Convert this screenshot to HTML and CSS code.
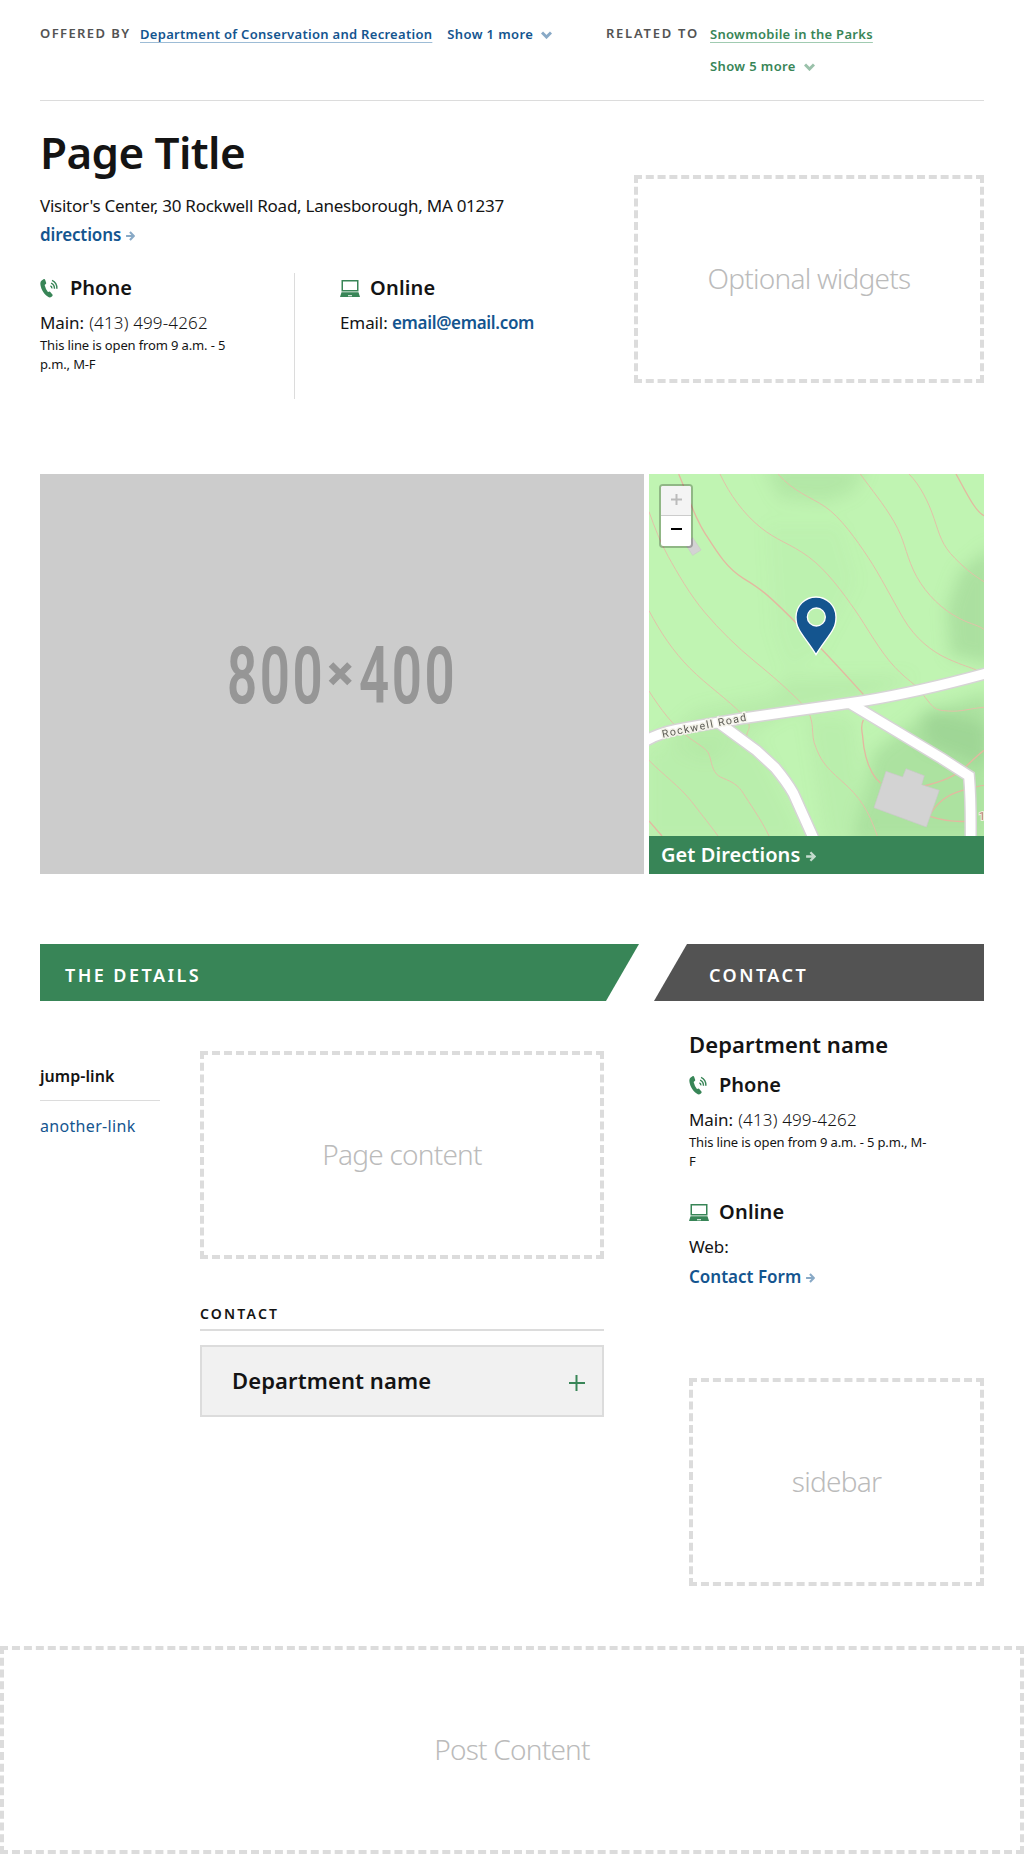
FILE: index.html
```html
<!DOCTYPE html>
<html lang="en">
<head>
<meta charset="utf-8">
<title>Page Title</title>
<link rel="stylesheet" href="styles.css">
</head>
<body>
<svg class="sprite" width="0" height="0" aria-hidden="true">
  <symbol id="phone" viewBox="0 0 18 20"><path d="M1.300 1.500 3.600.1Q4.600-.2 5 1L6 3.900Q6.300 5 5.300 5.500L4.400 6.200Q5.400 10.500 7.900 13.600L9 13.300Q10 13 10.600 13.900L12.600 16.400Q13.200 17.400 12.300 18.100L11.300 19Q9.700 20 7.600 18.400C2.400 15-.3 8-.1 4.300Q.1 2.300 1.300 1.500Z"/><g fill="none" stroke="currentColor" stroke-width="1.500"><path d="M10.500 7.200q1.700.7 1.500 2.600M11.200 4.300q3.500 1.300 3.600 5.900M12.200 1.500q5.300 2.300 5.100 8.800"/></g></symbol>
  <symbol id="laptop" viewBox="0 0 20 17"><path fill-rule="evenodd" d="M1.500 0h17v11.500h-17zM3 1.500v8.500h14V1.500z"/><path d="M1.500 12.300h17L20 17H0zM8 15.300v1h4v-1z" fill-rule="evenodd"/></symbol>
  <symbol id="arrow" viewBox="0 0 8 9"><path d="M0 4.500h7M3.500 1l3.500 3.500L3.500 8" fill="none" stroke="currentColor" stroke-width="1.900"/></symbol>
  <symbol id="chevron" viewBox="0 0 11 8"><path d="M1 1.500l4.500 4.500L10 1.500" fill="none" stroke="currentColor" stroke-width="3"/></symbol>
</svg>

<div class="container">
  <div class="relations">
    <div class="relation offered">
      <span class="relation-label">OFFERED BY</span>
      <div class="relation-items">
        <a class="underlined">Department of Conservation and Recreation</a>
        <a class="more">Show 1 more<svg class="chevron"><use href="#chevron"/></svg></a>
      </div>
    </div>
    <div class="relation related">
      <span class="relation-label">RELATED TO</span>
      <div class="relation-items">
        <a class="underlined">Snowmobile in the Parks</a>
        <a class="more">Show 5 more<svg class="chevron"><use href="#chevron"/></svg></a>
      </div>
    </div>
  </div>

  <header class="page-header">
    <div class="intro">
      <h1>Page Title</h1>
      <p class="address">Visitor's Center, 30 Rockwell Road, Lanesborough, MA 01237</p>
      <p class="directions"><a class="link">directions<svg class="arrow"><use href="#arrow"/></svg></a></p>
      <div class="contact-row">
        <section class="contact-group">
          <h2 class="contact-title"><svg class="phone"><use href="#phone"/></svg>Phone</h2>
          <p class="contact-line">Main: <span class="number">(413) 499-4262</span></p>
          <p class="note">This line is open from 9 a.m. - 5 p.m., M-F</p>
        </section>
        <section class="contact-group online">
          <h2 class="contact-title"><svg class="laptop"><use href="#laptop"/></svg>Online</h2>
          <p class="contact-line">Email: <a class="link email">email@email.com</a></p>
        </section>
      </div>
    </div>
    <div class="placeholder widgets">Optional widgets</div>
  </header>

  <div class="location">
    <svg class="photo" viewBox="0 0 604 400">
      <text class="photo-size" transform="translate(187 229) scale(.66 1)">800</text>
      <path class="photo-times" d="M291 190.500 309.500 209M309.500 190.500 291 209"/>
      <text class="photo-size" transform="translate(319 229) scale(.66 1)">400</text>
    </svg>
    <div class="map-card">
      <div class="map">
        <svg class="map-canvas" viewBox="27 27 1005 1086" preserveAspectRatio="none">
          <defs><filter id="soft" x="-30%" y="-30%" width="160%" height="160%"><feGaussianBlur stdDeviation="24"/></filter></defs>
          <rect x="27" y="27" width="1005" height="1086" fill="#c0f4b2"/>
          <g class="shade" filter="url(#soft)">
            <path d="M370 0H680L640 80 560 110 420 100Z" opacity=".25"/>
            <path d="M1060 240 960 320 920 430 930 570 1060 600Z" opacity=".4"/>
            <path d="M1050 680 860 740 700 860 640 1130H1050Z" opacity=".38"/>
            <path d="M440 640 820 635 700 690 440 740 200 880 60 830 170 735 400 690Z" opacity=".17"/>
            <path d="M380 180H600L650 350 540 560 440 620 400 500Z" opacity=".06"/>
            <path d="M850 730 1050 780V910L860 840Z" opacity=".4"/>
            <path d="M20 850 350 830 500 1130H20Z" opacity=".12"/>
            <path d="M500 750 640 760 680 1130H560Z" opacity=".12"/>
          </g>
          <g class="contours">
            <path d="M240 27C270 90 310 145 360 186S450 235 505 275 610 385 645 435 720 560 765 607 815 645 850 690 885 735 925 738 990 730 1032 727"/>
            <path d="M414 27C460 80 510 95 555 125S650 225 685 278 755 400 790 460 875 560 925 582 985 605 1010 615"/>
            <path d="M661 27C695 75 730 115 762 170S795 260 820 315 890 420 940 450 1005 475 1032 493"/>
            <path d="M807 27C840 60 865 110 882 160S905 240 945 280 1005 333 1032 350"/>
            <path d="M27 140C45 190 60 230 85 275S150 390 195 443 290 545 345 590 440 670 485 715 510 800 525 840 550 900 605 948 685 1035 712 1113"/>
            <path d="M27 437C60 500 100 560 150 610S265 705 305 747 320 790 320 815"/>
            <path d="M27 678C60 730 100 785 150 820S205 855 212 885 225 930 250 940 295 960 310 985 365 1065 387 1113"/>
            <path d="M27 886C70 930 120 965 155 1010S210 1080 234 1113"/>
            <g class="major">
              <path d="M116 27C145 95 160 150 195 205S260 310 310 340 380 385 465 470 600 610 670 688M670 765C660 785 667 800 668 815S675 915 722 955M948 27C975 75 1005 140 1032 152M27 1068 66 1113M845 964Q935 945 977 905T1032 856M870 1050Q900 995 965 977T1032 962M870 1054Q925 1072 980 1069"/>
            </g>
          </g>
          <path d="M140 243 158 218 183 255 158 271Z" class="building"/>
          <path d="M738 919 788 936 798 911 853 932 845 959 898 976 859 1086 702 1028Z" class="building"/>
          <path class="road-edge" d="M15 829Q60 800 140 788L300 761 670 708Q840 680 1050 622M225 765 350 857 405 908Q440 950 460 985L525 1130M630 715 760 793 905 880 987 933Q993 1000 992 1120"/>
          <path class="road" d="M15 829Q60 800 140 788L300 761 670 708Q840 680 1050 622M225 765 350 857 405 908Q440 950 460 985L525 1130M630 715 760 793 905 880 987 933Q993 1000 992 1120"/>
          <text class="road-name" x="68" y="818" textLength="257" transform="rotate(-11.500 68 818)">Rockwell Road</text>
          <text class="contour-name" x="1016" y="1066">1</text>
          <path class="pin" fill-rule="evenodd" d="M528 569C515 545 485 510 476 491 468 478 468 466 468 456A60 60 0 0 1 588 456C588 466 588 478 580 491 571 510 541 545 528 569ZM529 429A27 27 0 1 0 529 483 27 27 0 1 0 529 429Z"/>
        </svg>
        <div class="zoom">
          <span class="zoom-in"><svg width="11" height="11"><path d="M0 5.500h11M5.500 0v11" stroke="currentColor" stroke-width="2"/></svg></span>
          <span class="zoom-out"><svg width="11" height="2"><path d="M0 1h11" stroke="currentColor" stroke-width="2"/></svg></span>
        </div>
      </div>
      <a class="map-link">Get Directions<svg class="arrow"><use href="#arrow"/></svg></a>
    </div>
  </div>

  <main class="columns">
    <div class="main-column">
      <h2 class="banner banner-main">THE DETAILS</h2>
      <div class="details">
        <nav class="jump-links">
          <a class="jump current">jump-link</a>
          <a class="jump">another-link</a>
        </nav>
        <div class="content">
          <div class="placeholder">Page content</div>
          <h3 class="section-title">CONTACT</h3>
          <div class="accordion"><span>Department name</span><svg width="16" height="16"><path d="M0 8h16M7.500 0v16" stroke="currentColor" stroke-width="2"/></svg></div>
        </div>
      </div>
    </div>
    <aside class="side-column">
      <h2 class="banner banner-side">CONTACT</h2>
      <div class="side-body">
        <h3 class="department">Department name</h3>
        <section>
          <h4 class="contact-title"><svg class="phone"><use href="#phone"/></svg>Phone</h4>
          <p class="contact-line">Main: <span class="number">(413) 499-4262</span></p>
          <p class="note">This line is open from 9 a.m. - 5 p.m., M-F</p>
        </section>
        <section class="side-online">
          <h4 class="contact-title"><svg class="laptop"><use href="#laptop"/></svg>Online</h4>
          <p class="contact-line">Web:</p>
          <p class="form-link"><a class="link">Contact Form<svg class="arrow"><use href="#arrow"/></svg></a></p>
        </section>
        <div class="placeholder">sidebar</div>
      </div>
    </aside>
  </main>
</div>
<div class="placeholder">Post Content</div>
</body>
</html>
```
FILE: styles.css
```css
* { box-sizing: border-box; }
body { margin: 0; background: #fff; color: #141414; font-family: "Noto Sans", sans-serif; font-size: 17px; }
h1, h2, h3, h4, p { margin: 0; }
.sprite { display: block; height: 0; }
.container { padding: 18px 40px 0; }

.relations { display: flex; height: 83px; border-bottom: 1px solid #dcdcdc; font-size: 13px; line-height: 32px; font-weight: 600; letter-spacing: .29px; }
.relation { display: flex; align-items: flex-start; }
.offered { width: 566px; gap: 10px; color: #14558f; }
.related { gap: 10px; color: #388557; }
.relation-label { flex: none; color: #535353; line-height: 30px; letter-spacing: 1.4px; white-space: nowrap; }
.offered .relation-label { width: 90px; }
.related .relation-label { width: 94px; letter-spacing: 1.75px; }
.relation-items { display: flex; }
.offered .relation-items { gap: 15px; }
.related .relation-items { flex-direction: column; align-items: flex-start; }
.underlined { height: 32px; white-space: nowrap; text-decoration: underline; text-decoration-thickness: 1px; text-underline-offset: 3px; text-decoration-color: #9dbcd6; }
.related .underlined { text-decoration-color: #a0cbb1; }
.more { white-space: nowrap; letter-spacing: .38px; }
.chevron { width: 11px; height: 8px; margin-left: 8px; opacity: .5; }

.page-header { display: flex; justify-content: space-between; padding-top: 25px; }
.intro { width: 564px; }
h1 { font-size: 44px; line-height: 53px; font-weight: 600; letter-spacing: -.6px; margin-bottom: 12px; }
.address { line-height: 30px; letter-spacing: -.26px; }
.directions { line-height: 28px; }
.link { color: #14558f; font-weight: 600; }
.directions .link { letter-spacing: -.12px; }
.email { letter-spacing: -.32px; }
.arrow { width: 9px; height: 10px; margin-left: 5px; opacity: .5; }
.contact-row { display: flex; margin-top: 24px; height: 126px; }
.contact-group { width: 254px; padding-right: 60px; }
.online { border-left: 1px solid #dcdcdc; padding: 0 0 0 45px; }
.contact-title { display: flex; align-items: center; font-size: 20px; line-height: 30px; font-weight: 600; }
.online .contact-title, .side-online .contact-title { letter-spacing: .2px; }
.phone { width: 18px; height: 19px; margin-right: 12px; color: #388557; fill: #388557; }
.laptop { width: 20px; height: 17px; margin-right: 10px; fill: #388557; }
.contact-line { margin-top: 7px; line-height: 26px; letter-spacing: -.1px; white-space: nowrap; }
.number { font-weight: 300; letter-spacing: .15px; margin-left: 1px; }
.note { font-size: 13px; line-height: 19px; letter-spacing: -.14px; }

.placeholder { height: 208px; padding-bottom: 2px; border: 4px dashed #dcdcdc; color: #bbb; font-size: 28px; font-weight: 300; letter-spacing: -.77px; display: flex; align-items: center; justify-content: center; }
.widgets { width: 350px; margin-top: 49px; }

.location { display: flex; gap: 5px; margin-top: 75px; height: 400px; }
.photo { width: 604px; height: 400px; background: #ccc; }
.photo-size { font-family: Roboto, sans-serif; font-size: 80px; font-weight: 600; letter-spacing: 4px; fill: #969696; }
.photo-times { stroke: #969696; stroke-width: 6.5; }
.map-card { width: 335px; }
.map { height: 362px; position: relative; }
.map-canvas { display: block; width: 335px; height: 362px; }
.shade { fill: #8cc484; }
.contours { fill: none; stroke: #e2c0a8; stroke-width: 3; }
.major { stroke: #e3b8a0; stroke-width: 4; }
.building { fill: #d3d3d3; stroke: #cac7c9; stroke-width: 2; }
.road, .road-edge { fill: none; stroke-linejoin: miter; }
.road-edge { stroke: #d6d4d5; stroke-width: 38; }
.road { stroke: #fff; stroke-width: 29; }
.road-name { font-family: Roboto, sans-serif; font-size: 32px; fill: #5c5c55; stroke: #f4f3ea; stroke-width: 9; paint-order: stroke; stroke-linejoin: round; }
.contour-name { font-family: Roboto, sans-serif; font-size: 34px; fill: #b97c70; stroke: #f0efe0; stroke-width: 6; paint-order: stroke; }
.pin { fill: #14558f; stroke: #fff; stroke-width: 4; }
.zoom { position: absolute; left: 10px; top: 10px; width: 34px; border: 2px solid rgba(0, 0, 0, .25); border-radius: 4px; background-clip: padding-box; background-color: #fff; }
.zoom-in, .zoom-out { display: flex; height: 30px; align-items: center; justify-content: center; }
.zoom-in { padding-bottom: 3px; background: #f4f4f4; color: #bbb; border-bottom: 1px solid #ccc; border-radius: 2px 2px 0 0; }
.zoom-out { color: #000; padding-bottom: 4px; }
.map-link { display: block; height: 38px; padding-left: 12px; background: #388557; color: #fff; font-size: 20px; font-weight: 600; line-height: 37px; letter-spacing: .05px; }
.map-link .arrow { width: 10px; height: 11px; margin-left: 6px; opacity: .7; }

.columns { display: flex; justify-content: space-between; margin-top: 70px; height: 702px; }
.main-column { width: 599px; }
.side-column { width: 330px; }
.banner { height: 57px; color: #fff; font-size: 18px; font-weight: 600; line-height: 62px; letter-spacing: 2.45px; }
.banner-main { padding-left: 25px; background: #388557; clip-path: polygon(0 0, 100% 0, 566px 100%, 0 100%); }
.banner-side { padding-left: 55px; background: #535353; clip-path: polygon(33px 0, 100% 0, 100% 100%, 0 100%); }
.details { display: flex; gap: 40px; padding-top: 50px; }
.jump-links { width: 120px; }
.jump { display: block; height: 50px; line-height: 50px; font-size: 16px; letter-spacing: .32px; color: #14558f; }
.current { color: #141414; font-weight: 600; letter-spacing: .05px; border-bottom: 1px solid #dcdcdc; }
.content { width: 404px; }
.section-title { margin-top: 44px; height: 28px; border-bottom: 2px solid #dcdcdc; font-size: 14px; font-weight: 600; line-height: 22px; letter-spacing: 2.2px; }
.accordion { display: flex; align-items: center; justify-content: space-between; margin-top: 14px; height: 72px; padding: 0 17px 0 30px; border: 2px solid #dcdcdc; background: #f1f1f1; font-size: 22px; font-weight: 600; letter-spacing: .1px; }
.accordion svg { color: #388557; margin-top: 4px; }
.accordion span { margin-top: -2px; }
.side-body { padding: 28px 0 0 35px; }
.department { font-size: 22px; font-weight: 600; line-height: 30px; margin-bottom: 11px; letter-spacing: .1px; }
.side-body .note { width: 238px; }
.side-online { margin-top: 26px; }
.form-link { line-height: 29px; margin-top: 2px; }
.side-body .placeholder { margin-top: 87px; }
```
